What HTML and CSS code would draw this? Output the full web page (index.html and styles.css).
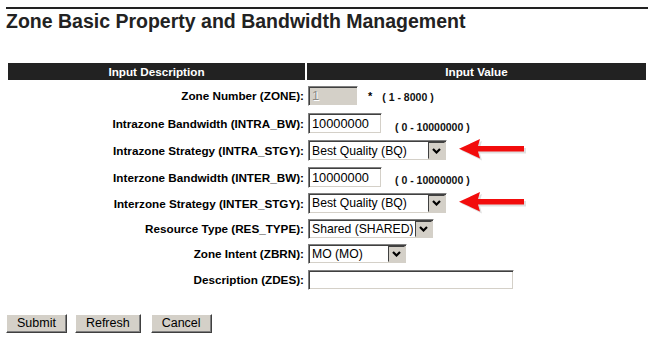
FILE: index.html
```html
<!DOCTYPE html>
<html lang="en">
<head>
    <meta charset="UTF-8">
    <title>Zone Basic Property and Bandwidth Management</title>
    <link rel="stylesheet" href="styles.css">
</head>
<body>

<h2 class="page-title">Zone Basic Property and Bandwidth Management</h2>

<form class="zone-form">
    <table class="grid">
        <thead>
            <tr>
                <th class="col-desc">Input Description</th>
                <th>Input Value</th>
            </tr>
        </thead>
        <tbody>
            <tr class="tall">
                <td class="lbl">Zone Number (ZONE):</td>
                <td class="val"><input class="txt w-zone" type="text" value="1" disabled><span class="req">*</span><span class="range">( 1 - 8000 )</span></td>
            </tr>
            <tr>
                <td class="lbl">Intrazone Bandwidth (INTRA_BW):</td>
                <td class="val"><input class="txt w-bw" type="text" value="10000000"><span class="range range-bw">( 0 - 10000000 )</span></td>
            </tr>
            <tr>
                <td class="lbl">Intrazone Strategy (INTRA_STGY):</td>
                <td class="val">
                    <span class="combo w-wide"><select><option>Best Quality (BQ)</option></select><span class="combo-btn"><svg width="9" height="6" viewBox="0 0 9 6"><polyline points="1,1 4.5,4.5 8,1" /></svg></span></span><svg class="pointer" width="68" height="23" viewBox="0 0 68 23"><polygon class="pointer-shade" points="2,11.5 23,2 21,9 67,9 67,14.5 21,14.5 23,21.5" /><polygon class="pointer-body" points="0,9.75 21,0 19,7 65,7 65,12.5 19,12.5 21,19.5" /></svg>
                </td>
            </tr>
            <tr class="mid">
                <td class="lbl">Interzone Bandwidth (INTER_BW):</td>
                <td class="val"><input class="txt w-bw" type="text" value="10000000"><span class="range range-bw">( 0 - 10000000 )</span></td>
            </tr>
            <tr class="mid">
                <td class="lbl">Interzone Strategy (INTER_STGY):</td>
                <td class="val">
                    <span class="combo w-wide"><select><option>Best Quality (BQ)</option></select><span class="combo-btn"><svg width="9" height="6" viewBox="0 0 9 6"><polyline points="1,1 4.5,4.5 8,1" /></svg></span></span><svg class="pointer" width="68" height="23" viewBox="0 0 68 23"><polygon class="pointer-shade" points="2,11.5 23,2 21,9 67,9 67,14.5 21,14.5 23,21.5" /><polygon class="pointer-body" points="0,9.75 21,0 19,7 65,7 65,12.5 19,12.5 21,19.5" /></svg>
                </td>
            </tr>
            <tr class="short">
                <td class="lbl">Resource Type (RES_TYPE):</td>
                <td class="val"><span class="combo w-mid"><select><option>Shared (SHARED)</option></select><span class="combo-btn"><svg width="9" height="6" viewBox="0 0 9 6"><polyline points="1,1 4.5,4.5 8,1" /></svg></span></span></td>
            </tr>
            <tr class="short">
                <td class="lbl">Zone Intent (ZBRN):</td>
                <td class="val"><span class="combo w-narrow"><select><option>MO (MO)</option></select><span class="combo-btn"><svg width="9" height="6" viewBox="0 0 9 6"><polyline points="1,1 4.5,4.5 8,1" /></svg></span></span></td>
            </tr>
            <tr>
                <td class="lbl">Description (ZDES):</td>
                <td class="val"><input class="txt w-desc" type="text" value=""></td>
            </tr>
        </tbody>
    </table>

    <div class="actions">
        <button type="button" class="btn">Submit</button>
        <button type="button" class="btn">Refresh</button>
        <button type="button" class="btn btn-cancel">Cancel</button>
    </div>
</form>

</body>
</html>
```

FILE: styles.css
```css
body {
    font-family: "Liberation Sans", Arial, sans-serif;
    margin: 7px 6px;
    background: #fff;
    color: #000;
}

.page-title {
    margin: 0 0 29px 0;
    padding-top: 1px;
    border-top: 2px solid #222;
    font-size: 19.5px;
    line-height: 22px;
    font-weight: bold;
    color: #222;
}

.grid {
    width: 100%;
    table-layout: fixed;
    border-collapse: separate;
    border-spacing: 2px;
}

.grid th {
    height: 17px;
    padding: 0;
    background: #222;
    color: #fff;
    font-size: 11.7px;
    font-weight: bold;
    text-align: center;
}

.grid .col-desc {
    width: 297px;
}

.grid td {
    height: 25px;
    padding: 0 1px;
    vertical-align: middle;
}

.grid tr.tall td { height: 27px; }
.grid tr.mid td { height: 24px; }
.grid tr.short td { height: 23px; }

.lbl {
    text-align: right;
    font-size: 11.7px;
    font-weight: bold;
    white-space: nowrap;
}

.val {
    white-space: nowrap;
    font-size: 12px;
}

/* sunken win2k style fields */
.txt, .combo {
    box-sizing: border-box;
    border: 1px solid;
    border-color: #808080 #fff #fff #808080;
    box-shadow: inset 1px 1px 0 #404040, inset -1px -1px 0 #d4d0c8;
    vertical-align: middle;
}

.txt {
    height: 21px;
    margin: 0;
    padding: 0 3px;
    font-family: "Liberation Sans", Arial, sans-serif;
    font-size: 12.8px;
    color: #000;
    background: #fff;
    outline: none;
}

.txt:disabled {
    background: #d4d0c8;
    color: #8c8a85;
    text-shadow: 1px 1px 0 #fff;
}

.w-zone { width: 50px; height: 20px; }
.w-bw { width: 74px; }
.w-desc { width: 206px; height: 20px; }

.req {
    margin-left: 10px;
    font-size: 11px;
    font-weight: bold;
    vertical-align: middle;
}

.range {
    margin-left: 10px;
    font-size: 10.5px;
    font-weight: bold;
    color: #111;
    vertical-align: -2px;
}

.range-bw {
    margin-left: 13px;
    vertical-align: -4px;
}

.combo {
    display: inline-flex;
    height: 21px;
    padding: 1px;
    background: #fff;
}

.combo select {
    flex: 1;
    min-width: 0;
    margin: 0;
    padding: 0 2px;
    border: 0;
    appearance: none;
    -webkit-appearance: none;
    background: #fff;
    font-family: "Liberation Sans", Arial, sans-serif;
    font-size: 12.2px;
    color: #000;
    outline: none;
}

.combo-btn {
    box-sizing: border-box;
    width: 17px;
    display: flex;
    align-items: center;
    justify-content: center;
    background: #d4d0c8;
    border: 1px solid;
    border-color: #404040 #d4d0c8 #d4d0c8 #404040;
}

.combo-btn polyline {
    fill: none;
    stroke: #000;
    stroke-width: 2.2;
}

.w-wide { width: 139px; }
.w-mid { width: 126px; height: 20px; }
.w-narrow { width: 99px; height: 20px; }

.pointer {
    margin-left: 12px;
    vertical-align: middle;
}

.pointer-body { fill: #f20c0c; }
.pointer-shade { fill: rgba(0, 0, 0, 0.12); }

.actions {
    display: flex;
    column-gap: 8px;
    margin-top: 20px;
}

.btn {
    box-sizing: border-box;
    height: 19px;
    margin: 0;
    padding: 0 10px;
    border: 1px solid;
    border-color: #fff #404040 #404040 #fff;
    box-shadow: inset -1px -1px 0 #808080;
    background: #d4d0c8;
    font-family: "Liberation Sans", Arial, sans-serif;
    font-size: 12.5px;
    line-height: 15px;
    color: #000;
}

.btn-cancel {
    margin-left: 2px;
}
```
